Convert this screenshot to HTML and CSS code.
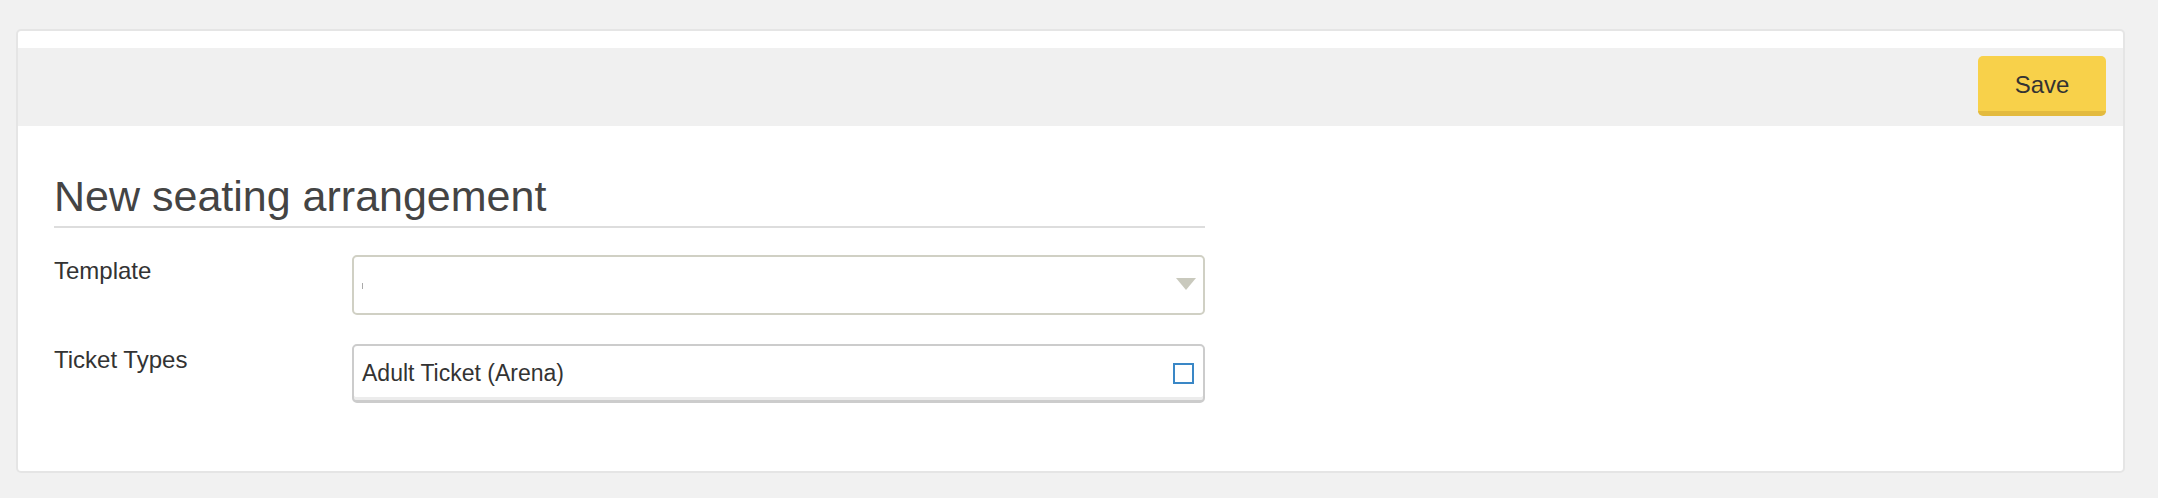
FILE: index.html
```html
<!DOCTYPE html>
<html lang="en">
<head>
  <meta charset="UTF-8">
  <meta name="viewport" content="width=device-width, initial-scale=1.0">
  <title>New seating arrangement</title>
  <link rel="stylesheet" href="styles.css">
</head>
<body>
  <div class="panel">
    <div class="toolbar">
      <button class="save-btn" type="button">Save</button>
    </div>
    <div class="content">
      <div class="form">
        <h1>New seating arrangement</h1>
        <div class="form-row">
          <label class="form-label">Template</label>
          <div class="select-box">
            <span class="select-value"></span>
            <span class="select-arrow"></span>
          </div>
        </div>
        <div class="form-row">
          <label class="form-label">Ticket Types</label>
          <div class="multi-box">
            <span class="multi-option">Adult Ticket (Arena)</span>
            <span class="check"></span>
          </div>
        </div>
      </div>
    </div>
  </div>
</body>
</html>
```

FILE: styles.css
```css
body {
  margin: 0;
  padding: 29px 33px 0 16px;
  background-color: #f1f1f1;
  font-family: "Liberation Sans", Arial, Helvetica, sans-serif;
  color: #333;
}
.panel {
  background-color: #fff;
  border: 2px solid #e5e5e5;
  border-radius: 5px;
  padding-top: 17px;
}
.toolbar {
  height: 78px;
  box-sizing: border-box;
  background-color: #f0f0f0;
  display: flex;
  justify-content: flex-end;
  align-items: flex-start;
  padding: 8px 17px 0 0;
}
.save-btn {
  width: 128px;
  height: 60px;
  background-color: #f8d14a;
  border: none;
  border-bottom: 5px solid #e3ba3e;
  border-radius: 5px;
  color: #333;
  font-family: inherit;
  font-size: 24px;
  padding: 3px 0 0;
  cursor: pointer;
}
.content {
  padding: 47px 0 68px 36px;
}
.form {
  width: 1151px;
}
h1 {
  margin: 0;
  font-size: 43px;
  line-height: 46px;
  font-weight: normal;
  color: #444;
  padding-bottom: 7px;
  border-bottom: 2px solid #ddd;
}
.form-row {
  display: flex;
  margin-top: 27px;
}
.form-row + .form-row {
  margin-top: 29px;
}
.form-label {
  width: 298px;
  flex-shrink: 0;
  font-size: 24px;
  line-height: 32px;
  color: #333;
}
.select-box {
  flex: 1;
  height: 60px;
  box-sizing: border-box;
  border: 2px solid #d0d0c4;
  border-radius: 5px;
  display: flex;
  align-items: center;
  justify-content: space-between;
  padding: 0 7px 0 8px;
}
.select-value {
  width: 1px;
  height: 6px;
  margin-top: 2px;
  background-color: #aaa;
}
.select-arrow {
  width: 0;
  height: 0;
  border-left: 10px solid transparent;
  border-right: 10px solid transparent;
  border-top: 12px solid #c9c9bd;
  margin-top: -2px;
}
.multi-box {
  flex: 1;
  height: 59px;
  box-sizing: border-box;
  border: 2px solid #ccc;
  border-bottom-width: 3px;
  border-radius: 5px;
  box-shadow: inset 0 -3px 0 #ececec;
  display: flex;
  align-items: center;
  justify-content: space-between;
  padding: 0 9px 0 8px;
}
.multi-option {
  font-size: 23px;
  line-height: 26px;
  color: #333;
}
.check {
  width: 21px;
  height: 21px;
  box-sizing: border-box;
  border: 2px solid #3a87c6;
  background-color: #fff;
}
```
